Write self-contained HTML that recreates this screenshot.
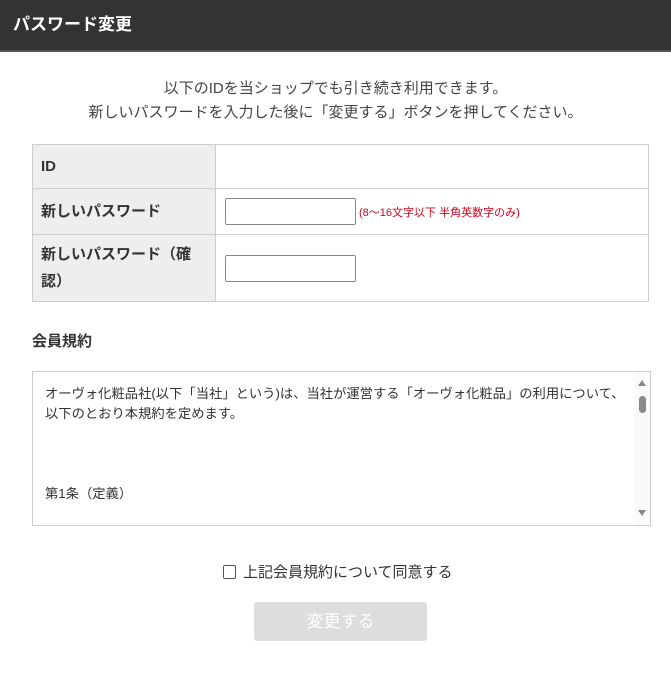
<!DOCTYPE html>
<html><head><meta charset="utf-8"><style>
*{margin:0;padding:0;box-sizing:border-box}
body{width:671px;height:678px;background:#fff;font-family:"Liberation Sans","Noto Sans CJK JP",sans-serif;color:#333;position:relative;overflow:hidden}
.hd{position:absolute;left:0;top:0;width:671px;height:52px;background:#333;border-bottom:2px solid #555;color:#fff;font-weight:bold;font-size:17px;line-height:50px;padding-left:13px}
.intro{position:absolute;top:77px;left:0;width:671px;text-align:center;font-size:15px;line-height:24px;color:#444}
table{position:absolute;left:32px;top:144px;width:617px;border-collapse:collapse}
td{border:1px solid #ccc;font-size:15px}
td.l{background:#eee;width:183px;font-weight:bold;padding:0 16px 0 8px;line-height:27px;color:#333;word-break:break-all}
td.r{padding:0 9px}
.inp{display:inline-block;width:131px;height:27px;border:1px solid #888;border-radius:2px;vertical-align:middle;background:#fff}
.note{color:#d0021b;font-size:11px;vertical-align:middle;margin-left:3px}
.h2{position:absolute;left:32px;top:330px;font-size:15px;font-weight:bold}
.box{position:absolute;left:32px;top:371px;width:619px;height:155px;border:1px solid #ccc;font-size:13.3px;line-height:20px;color:#333}
.txt{position:absolute;left:12px;top:12px;width:600px}
.sb{position:absolute;right:0;top:0;width:16px;height:153px;background:#fafafa}
.cb{position:absolute;left:223px;top:565px;width:13px;height:14px;border:1px solid #555;border-radius:2px}
.cbt{position:absolute;left:243px;top:561px;font-size:15px;color:#333}
.btn{position:absolute;left:254px;top:602px;width:173px;height:39px;background:#ddd;border-radius:3px;color:#fff;font-size:17px;text-align:center;line-height:39px}
</style></head><body>
<div class="hd">パスワード変更</div>
<div class="intro">以下のIDを当ショップでも引き続き利用できます。<br>新しいパスワードを入力した後に「変更する」ボタンを押してください。</div>
<table>
<tr style="height:44px"><td class="l">ID</td><td class="r"></td></tr>
<tr style="height:46px"><td class="l">新しいパスワード</td><td class="r"><span class="inp"></span><span class="note">(8～16文字以下 半角英数字のみ)</span></td></tr>
<tr style="height:67px"><td class="l">新しいパスワード（確認）</td><td class="r"><span class="inp"></span></td></tr>
</table>
<div class="h2">会員規約</div>
<div class="box">
<div class="txt">オーヴォ化粧品社(以下「当社」という)は、当社が運営する「オーヴォ化粧品」の利用について、<br>以下のとおり本規約を定めます。<br><br><br><br>第1条（定義）</div>
<div class="sb">
<svg width="16" height="153" style="position:absolute;left:0;top:0">
<polygon points="4,14 8,8 12,14" fill="#888"/>
<rect x="5" y="24" width="7" height="17" rx="3.5" fill="#888"/>
<polygon points="4,138 8,144 12,138" fill="#888"/>
</svg></div>
</div>
<div class="cb"></div>
<div class="cbt">上記会員規約について同意する</div>
<div class="btn">変更する</div>
</body></html>
